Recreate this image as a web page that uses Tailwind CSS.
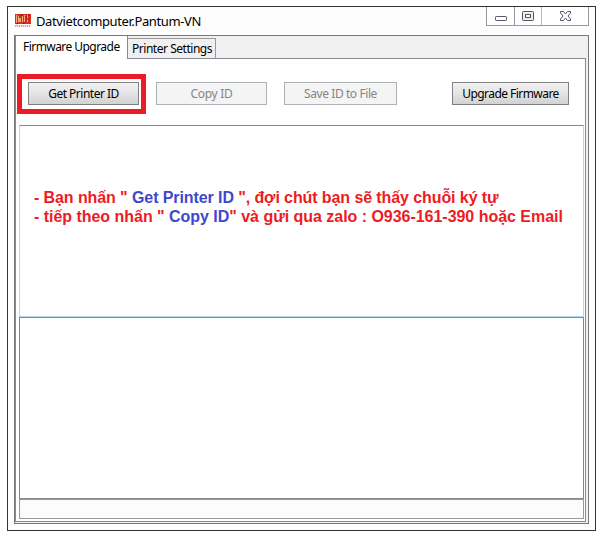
<!DOCTYPE html>
<html lang="vi">
<head>
<meta charset="utf-8">
<title>Datvietcomputer.Pantum-VN</title>
<script src="https://cdn.jsdelivr.net/npm/@tailwindcss/browser@4"></script>
</head>
<body class="bg-white w-[605px] h-[538px] overflow-hidden pl-[7px] pt-[6px] font-['Noto_Sans',sans-serif] text-[12px] leading-[16px] text-black">
<main class="w-[589px] h-[525px] border border-[#333] bg-[#fdfdfd] flex flex-col pl-[6px] pr-[6px]">
  <header class="h-[28px] flex justify-between shrink-0">
    <div class="flex pt-[6px] pl-px">
      <svg class="w-4 h-4 shrink-0" viewBox="0 0 16 16">
        <rect y="1" width="16" height="10" fill="#d92d20"/>
        <path d="M1.5 2v8M3.5 3v6M7.5 3v6M9.5 2v8M12.5 2v7" stroke="#f8c9a5" stroke-width=".8"/>
        <path d="M4 5h2v4H4z" fill="#f5ac25"/>
        <path d="M5 2h3M10 4h2M13 2h2M11 6h3M1 11l2-1M8 11l2-2" stroke="#8f1712"/>
        <path d="M0 13h16" stroke="#e4a5a0" stroke-width="2" stroke-dasharray="1.4 .6"/>
      </svg>
      <h1 class="pl-[5px] whitespace-nowrap text-[13px] tracking-[-0.38px]">Datvietcomputer.Pantum-VN</h1>
    </div>
    <div class="w-[103px] h-[19px] border border-t-0 border-[#999] bg-white flex">
      <div class="w-[28px] border-r border-[#999]"><svg class="w-[27px] h-[18px]" viewBox="0 0 27 18"><rect x="8.5" y="9.5" width="11" height="4" rx=".7" fill="white" stroke="#555970"/></svg></div>
      <div class="w-[27px] border-r border-[#bbb]"><svg class="w-[26px] h-[18px]" viewBox="0 0 26 18"><rect x="7.5" y="4.5" width="11" height="9" rx=".7" fill="#eee" stroke="#555970"/><rect x="10.500" y="7.500" width="5" height="3" fill="white" stroke="#555970"/></svg></div>
      <svg class="w-[46px] h-[18px]" viewBox="0 0 46 18"><path d="M18.5 4.500h3l2 2.500 2-2.500h3v1.500l-2.500 3 2.500 3v1.500h-3l-2-2.500-2 2.500h-3v-1.500l2.500-3-2.500-3z" fill="white" stroke="#555970"/></svg>
    </div>
  </header>
  <section class="w-[575px] h-[489px] border border-[#777] bg-[#f0f0f0] flex flex-col shrink-0">
    <nav class="flex h-[22px] items-end shrink-0">
      <div class="h-[23px] w-[113px] -mb-px relative z-10 bg-white border-r border-l border-[#888994] pl-[7px] pt-[3px] whitespace-nowrap tracking-[-0.55px]">Firmware Upgrade</div>
      <div class="h-[20px] w-[88px] border border-l-0 border-b-0 border-[#999] pl-[4px] pt-[2px] whitespace-nowrap tracking-[-0.47px]">Printer Settings</div>
    </nav>
    <div class="w-[571px] h-[464px] border border-[#888994] bg-white pl-[3px] flex flex-col">
      <div class="h-[66px] flex items-start pt-[15px] shrink-0 -ml-[2px]">
        <div class="w-[129px] h-[40px] border-[5px] border-[#ed1c24] p-[3px] pl-[6px] shrink-0"><button class="w-[111px] h-[23px] border border-[#808080] bg-linear-to-b from-[#f2f2f2] via-[#e4e4e4] to-[#d2d2d2] whitespace-nowrap tracking-[-0.5px]">Get Printer ID</button></div>
        <button class="mt-[8px] ml-[10px] w-[111px] h-[23px] shrink-0 border border-[#adb2b5] bg-[#f4f4f4] text-[#858585] whitespace-nowrap tracking-[-0.3px]">Copy ID</button>
        <button class="mt-[8px] ml-[17px] w-[113px] h-[23px] shrink-0 border border-[#adb2b5] bg-[#f4f4f4] text-[#858585] whitespace-nowrap tracking-[-0.42px]">Save ID to File</button>
        <button class="mt-[8px] ml-[55px] w-[117px] h-[23px] shrink-0 border border-[#808080] bg-linear-to-b from-[#f2f2f2] via-[#e4e4e4] to-[#d2d2d2] whitespace-nowrap tracking-[-0.55px]">Upgrade Firmware</button>
      </div>
      <div class="w-[565px] h-[192px] shrink-0 border border-t-[#5c94b8] border-x-[#b9d5e8] border-b-[#b7d9ed] pt-[62px] pl-[14px] font-['Liberation_Sans',sans-serif] font-bold text-[16px] leading-[19px] text-[#ed1c24] whitespace-nowrap">
        <p class="tracking-[-0.09px]">- Bạn nhấn " <span class="text-[#3f48cc]">Get Printer ID</span> ", đợi chút bạn sẽ thấy chuỗi ký tự</p>
        <p class="tracking-[-0.03px]">- tiếp theo nhấn " <span class="text-[#3f48cc]">Copy ID</span>" và gửi qua zalo : O936-161-390 hoặc Email</p>
      </div>
      <div class="w-[565px] h-[182px] shrink-0 border border-[#828790]"></div>
      <div class="w-[565px] h-[20px] shrink-0 border border-[#999] bg-[#fcfcfc]"></div>
    </div>
  </section>
</main>
</body>
</html>
